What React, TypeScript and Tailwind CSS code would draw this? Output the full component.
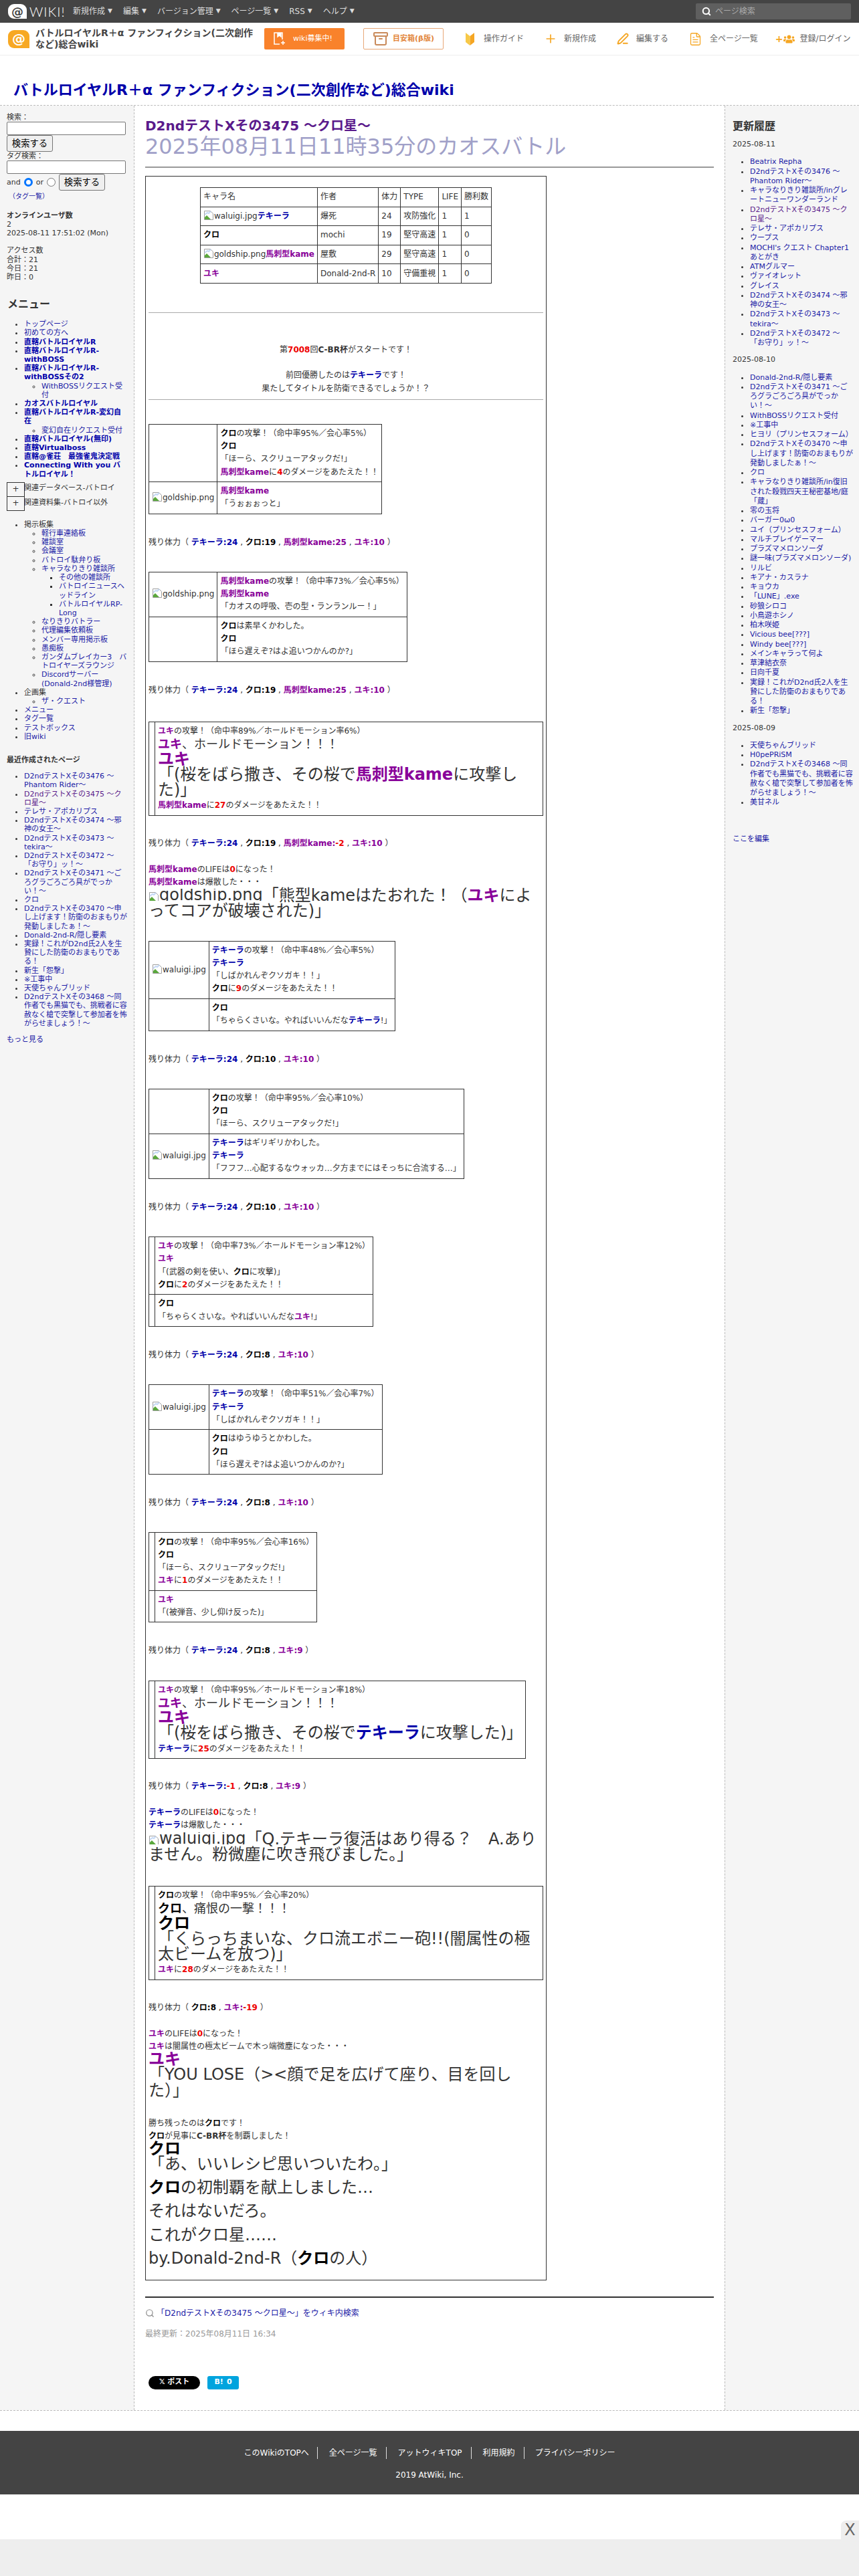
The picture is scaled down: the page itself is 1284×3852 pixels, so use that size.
import { type ReactNode } from "react";
import { Archive, FileText, PenLine, Plus, Search } from "lucide-react";
import { FaUsers } from "react-icons/fa";

const T = ({ children = "テキーラ" }: { children?: ReactNode }) => <b className="text-[#0000aa]">{children}</b>;
const K = ({ children = "クロ" }: { children?: ReactNode }) => <b className="text-black">{children}</b>;
const U = ({ children = "ユキ" }: { children?: ReactNode }) => <b className="text-[#880099]">{children}</b>;
const M = ({ children = "馬刺型kame" }: { children?: ReactNode }) => <b className="text-[#880099]">{children}</b>;
const R = ({ children }: { children: ReactNode }) => <b className="text-[#ee0000]">{children}</b>;
const Big = ({ children }: { children: ReactNode }) => <span className="text-[24px]">{children}</span>;
const Mid = ({ children }: { children: ReactNode }) => <span className="text-[18px]">{children}</span>;

function BrokenIcon() {
  return (
    <svg className="inline-block align-[-3px]" width="16" height="16" viewBox="0 0 16 16">
      <path d="M1.5 1.5h9l4 4v9h-13z" fill="#fff" stroke="#a0a0a0" />
      <path d="M2 14v-3l3-3 3 3 3 3z" fill="#5aa83c" />
      <path d="M2 7l4-3 2 1 3-3" fill="none" stroke="#c4d8f4" strokeWidth="2" />
    </svg>
  );
}

function BrokenImg({ alt, big }: { alt: string; big?: boolean }) {
  if (big) {
    return (
      <span className="inline-block h-[18px] overflow-hidden whitespace-nowrap">
        <BrokenIcon />
        {alt}
      </span>
    );
  }
  return (
    <span className="whitespace-nowrap">
      <BrokenIcon />
      {alt}
    </span>
  );
}

function Td({ children }: { children?: ReactNode }) {
  return <td className="border border-[#333] px-[4px] py-[4.2px] align-middle">{children}</td>;
}

function Battle({ rows }: { rows: [ReactNode, ReactNode][] }) {
  return (
    <table className="border-collapse">
      <tbody>
        {rows.map((row, i) => (
          <tr key={i}>
            <Td>{row[0]}</Td>
            <Td>{row[1]}</Td>
          </tr>
        ))}
      </tbody>
    </table>
  );
}

function Remain({ children, tight }: { children: ReactNode; tight?: boolean }) {
  return <div className={tight ? "pt-[32px] pb-[20px]" : "pt-[33px] pb-[34px]"}>残り体力（ {children} ）</div>;
}

function Links({ items }: { items: (string | { t: string; bold?: boolean; visited?: boolean; sub?: ReactNode; plain?: boolean })[] }) {
  return (
    <ul className="list-disc pl-[26px] [&_ul]:list-[circle] [&_ul_ul]:list-[square]">
      {items.map((item, i) => {
        const o = typeof item === "string" ? { t: item } : item;
        return (
          <li key={i}>
            <a
              className={
                o.plain
                  ? "text-[#333]"
                  : o.visited
                    ? "text-[#5a1a8b]"
                    : o.bold
                      ? "font-bold text-[#0000aa]"
                      : "text-[#1a1aa6]"
              }
            >
              {o.t}
            </a>
            {"sub" in o ? o.sub : null}
          </li>
        );
      })}
    </ul>
  );
}

const recent = [
  "D2ndテストXその3476 〜Phantom Rider〜",
  { t: "D2ndテストXその3475 〜クロ星〜", visited: true },
  "テレサ・アポカリプス",
  "D2ndテストXその3474 〜邪神の女王〜",
  "D2ndテストXその3473 〜tekira〜",
  "D2ndテストXその3472 〜「お守り」ッ！〜",
  "D2ndテストXその3471 〜ごろグラごろごろ具がでっかい！〜",
  "クロ",
  "D2ndテストXその3470 〜申し上げます！防衛のおまもりが発動しましたぁ！〜",
  "Donald-2nd-R/隠し要素",
  "実録！これがD2nd氏2人を生贄にした防衛のおまもりである！",
  "新生「怨撃」",
  "※工事中",
  "天使ちゃんブリッド",
  "D2ndテストXその3468 〜同作者でも黒猫でも、挑戦者に容赦なく槍で突撃して参加者を怖がらせましょう！〜",
];

const history1 = [
  "Beatrix Repha",
  "D2ndテストXその3476 〜Phantom Rider〜",
  "キャラなりきり雑談所/inグレートニューワンダーランド",
  { t: "D2ndテストXその3475 〜クロ星〜", visited: true },
  "テレサ・アポカリプス",
  "ウープス",
  "MOCHI's クエスト Chapter1 あとがき",
  "ATMグルマー",
  "ヴァイオレット",
  "グレイス",
  "D2ndテストXその3474 〜邪神の女王〜",
  "D2ndテストXその3473 〜tekira〜",
  "D2ndテストXその3472 〜「お守り」ッ！〜",
];
const history2 = [
  "Donald-2nd-R/隠し要素",
  "D2ndテストXその3471 〜ごろグラごろごろ具がでっかい！〜",
  "WithBOSSリクエスト受付",
  "※工事中",
  "ヒヨリ（プリンセスフォーム）",
  "D2ndテストXその3470 〜申し上げます！防衛のおまもりが発動しましたぁ！〜",
  "クロ",
  "キャラなりきり雑談所/in復旧された殺戮四天王秘密基地/庭「蔵」",
  "零の玉将",
  "バーガー0ω0",
  "ユイ（プリンセスフォーム）",
  "マルチプレイゲーマー",
  "プラズマメロンソーダ",
  "謎一味(プラズマメロンソーダ)",
  "リルビ",
  "キアナ・カスラナ",
  "キョウカ",
  "「LUNE」.exe",
  "砂狼シロコ",
  "小鳥遊ホシノ",
  "柏木咲姫",
  "Vicious bee[???]",
  "Windy bee[???]",
  "メインキャラって何よ",
  "草津結衣奈",
  "日向千夏",
  "実録！これがD2nd氏2人を生贄にした防衛のおまもりである！",
  "新生「怨撃」",
];
const history3 = [
  "天使ちゃんブリッド",
  "H0pePRiSM",
  "D2ndテストXその3468 〜同作者でも黒猫でも、挑戦者に容赦なく槍で突撃して参加者を怖がらせましょう！〜",
  "美甘ネル",
];

function LeftBar() {
  return (
    <aside className="bg-[#f5f5f5] border-r border-dashed border-[#bbb] pt-[11px] pl-[10px] pr-[9px] text-[11px] leading-[13.2px]">
      <div>検索：</div>
      <input className="block w-[178px] h-[20px] bg-white border border-[#767676] rounded-[2px]" />
      <button className="block h-[25px] w-[69px] bg-[#efefef] border border-[#767676] rounded-[3px] text-[13.33px] text-black">検索する</button>
      <div>タグ検索：</div>
      <input className="block w-[178px] h-[20px] bg-white border border-[#767676] rounded-[2px]" />
      <div className="flex items-center h-[25px]">
        and
        <span className="mx-[5px] w-[13px] h-[13px] rounded-full border-[3px] border-[#0075ff] bg-white" />
        or
        <span className="mx-[5px] w-[13px] h-[13px] rounded-full border border-[#767676] bg-white" />
        <button className="h-[25px] w-[69px] bg-[#efefef] border border-[#767676] rounded-[3px] text-[13.33px] text-black">検索する</button>
      </div>
      <div className="pl-[3px] pt-[2px] text-[10px] text-[#1a1aa6]">（タグ一覧）</div>
      <div className="mt-[15px] font-bold">オンラインユーザ数</div>
      <div>2</div>
      <div>2025-08-11 17:51:02 (Mon)</div>
      <div className="mt-[13.2px]">アクセス数</div>
      <div>合計：21</div>
      <div>今日：21</div>
      <div>昨日：0</div>
      <h3 className="mt-[24px] text-[16px] leading-[20px] font-bold pl-[1px]">メニュー</h3>
      <div className="mt-[13px]">
        <Links
          items={[
            "トップページ",
            "初めての方へ",
            { t: "直轄バトルロイヤルR", bold: true },
            { t: "直轄バトルロイヤルR-withBOSS", bold: true },
            {
              t: "直轄バトルロイヤルR-withBOSSその2",
              bold: true,
              sub: <Links items={["WithBOSSリクエスト受付"]} />,
            },
            { t: "カオスバトルロイヤル", bold: true },
            { t: "直轄バトルロイヤルR-変幻自在", bold: true, sub: <Links items={["変幻自在リクエスト受付"]} /> },
            { t: "直轄バトルロイヤル(無印)", bold: true },
            { t: "直轄Virtualboss", bold: true },
            { t: "直轄@雀荘　最強雀鬼決定戦", bold: true },
            { t: "Connecting With you バトルロイヤル！", bold: true },
          ]}
        />
      </div>
      <div className="mt-[5px] flex">
        <div>
          <div className="w-[27px] h-[22px] border border-[#333] flex items-center justify-center text-[12px]">+</div>
          <div className="w-[27px] h-[22px] -mt-px border border-[#333] flex items-center justify-center text-[12px]">+</div>
        </div>
        <div className="-ml-[1px]">
          <div className="h-[22px] pt-[2px]">関連データベース-バトロイ</div>
          <div className="h-[22px] pt-[2px]">関連資料集-バトロイ以外</div>
        </div>
      </div>
      <div className="mt-[13px]">
        <Links
          items={[
            {
              t: "掲示板集",
              plain: true,
              sub: (
                <Links
                  items={[
                    "軽行車連絡板",
                    "雑談室",
                    "会議室",
                    "バトロイ駄弁り板",
                    {
                      t: "キャラなりきり雑談所",
                      sub: <Links items={["その他の雑談所", "バトロイニュースヘッドライン", "バトルロイヤルRP-Long"]} />,
                    },
                    "なりきりバトラー",
                    "代理編集依頼板",
                    "メンバー専用掲示板",
                    "愚痴板",
                    "ガンダムブレイカー3　バトロイヤーズラウンジ",
                    "Discordサーバー(Donald-2nd様管理)",
                  ]}
                />
              ),
            },
            { t: "企画集", plain: true, sub: <Links items={["ザ・クエスト"]} /> },
            "メニュー",
            "タグ一覧",
            "テストボックス",
            "旧wiki",
          ]}
        />
      </div>
      <div className="mt-[22px] font-bold">最近作成されたページ</div>
      <div className="mt-[11px]">
        <Links items={recent} />
      </div>
      <div className="mt-[11px] text-[#1a1aa6]">もっと見る</div>
    </aside>
  );
}

function RightBar() {
  return (
    <aside className="bg-[#f5f5f5] border-l border-dashed border-[#bbb] pt-[21px] pl-[11px] pr-[8px] text-[11px] leading-[14.25px]">
      <h3 className="text-[16px] leading-[20px] font-bold">更新履歴</h3>
      <div className="mt-[10px]">2025-08-11</div>
      <div className="mt-[12px]"><Links items={history1} /></div>
      <div className="mt-[11px]">2025-08-10</div>
      <div className="mt-[12px]"><Links items={history2} /></div>
      <div className="mt-[11px]">2025-08-09</div>
      <div className="mt-[12px]"><Links items={history3} /></div>
      <div className="mt-[40px] text-[#1a1aa6]">ここを編集</div>
    </aside>
  );
}

function Article() {
  return (
    <div className="w-[600px] border border-[#333] p-[4px] pt-[16px] leading-[19.2px] text-[12px]">
      <table className="border-collapse mx-auto">
        <tbody>
          <tr><Td>キャラ名</Td><Td>作者</Td><Td>体力</Td><Td>TYPE</Td><Td>LIFE</Td><Td>勝利数</Td></tr>
          <tr><Td><BrokenImg alt="waluigi.jpg" /><T /></Td><Td>爆死</Td><Td>24</Td><Td>攻防強化</Td><Td>1</Td><Td>1</Td></tr>
          <tr><Td><K /></Td><Td>mochi</Td><Td>19</Td><Td>堅守高速</Td><Td>1</Td><Td>0</Td></tr>
          <tr><Td><BrokenImg alt="goldship.png" /><M /></Td><Td>屋敷</Td><Td>29</Td><Td>堅守高速</Td><Td>1</Td><Td>0</Td></tr>
          <tr><Td><U /></Td><Td>Donald-2nd-R</Td><Td>10</Td><Td>守備重視</Td><Td>1</Td><Td>0</Td></tr>
        </tbody>
      </table>
      <hr className="mt-[43px] border-[#aaa]" />
      <div className="mt-[46px] text-center">
        第<R>7008</R>回<b>C-BR杯</b>がスタートです！<br /><br />
        前回優勝したのは<T />です！<br />
        果たしてタイトルを防衛できるでしょうか！？
      </div>
      <hr className="mt-[6px] border-[#aaa]" />
      <div className="mt-[36px]">
        <Battle
          rows={[
            ["", <><K />の攻撃！（命中率95%／会心率5%）<br /><K /><br />「ほーら、スクリューアタックだ!」<br /><M />に<R>4</R>のダメージをあたえた！！</>],
            [<BrokenImg alt="goldship.png" />, <><M /><br />「うぉぉぉっと」</>],
          ]}
        />
      </div>
      <Remain><T>テキーラ:24</T> , <K>クロ:19</K> , <M>馬刺型kame:25</M> , <U>ユキ:10</U></Remain>
      <Battle
        rows={[
          [<BrokenImg alt="goldship.png" />, <><M />の攻撃！（命中率73%／会心率5%）<br /><M /><br />「カオスの呼吸、壱の型・ランランルー！」</>],
          ["", <><K />は素早くかわした。<br /><K /><br />「ほら遅えぞ?はよ追いつかんのか?」</>],
        ]}
      />
      <Remain><T>テキーラ:24</T> , <K>クロ:19</K> , <M>馬刺型kame:25</M> , <U>ユキ:10</U></Remain>
      <div className="mt-[3px]">
        <Battle
          rows={[
            ["", <><U />の攻撃！（命中率89%／ホールドモーション率6%）<br /><Mid><U />、ホールドモーション！！！</Mid><br /><Big><U /></Big><br /><Big>「(桜をばら撒き、その桜で<M />に攻撃した)」</Big><br /><M />に<R>27</R>のダメージをあたえた！！</>],
          ]}
        />
      </div>
      <Remain tight><T>テキーラ:24</T> , <K>クロ:19</K> , <M>馬刺型kame:<R>-2</R></M> , <U>ユキ:10</U></Remain>
      <div>
        <M />のLIFEは<R>0</R>になった！<br />
        <M />は爆散した・・・<br />
        <Big><BrokenImg big alt="goldship.png" />「熊型kameはたおれた！（<U />によってコアが破壊された)」</Big>
      </div>
      <div className="mt-[30px]">
        <Battle
          rows={[
            [<BrokenImg alt="waluigi.jpg" />, <><T />の攻撃！（命中率48%／会心率5%）<br /><T /><br />「しばかれんぞクソガキ！！」<br /><K />に<R>9</R>のダメージをあたえた！！</>],
            ["", <><K /><br />「ちゃらくさいな。やればいいんだな<T />!」</>],
          ]}
        />
      </div>
      <Remain><T>テキーラ:24</T> , <K>クロ:10</K> , <U>ユキ:10</U></Remain>
      <Battle
        rows={[
          ["", <><K />の攻撃！（命中率95%／会心率10%）<br /><K /><br />「ほーら、スクリューアタックだ!」</>],
          [<BrokenImg alt="waluigi.jpg" />, <><T />はギリギリかわした。<br /><T /><br />「フフフ…心配するなウォッカ…夕方までにはそっちに合流する…」</>],
        ]}
      />
      <Remain><T>テキーラ:24</T> , <K>クロ:10</K> , <U>ユキ:10</U></Remain>
      <Battle
        rows={[
          ["", <><U />の攻撃！（命中率73%／ホールドモーション率12%）<br /><U /><br />「(武器の剣を使い、<K />に攻撃)」<br /><K />に<R>2</R>のダメージをあたえた！！</>],
          ["", <><K /><br />「ちゃらくさいな。やればいいんだな<U />!」</>],
        ]}
      />
      <Remain><T>テキーラ:24</T> , <K>クロ:8</K> , <U>ユキ:10</U></Remain>
      <Battle
        rows={[
          [<BrokenImg alt="waluigi.jpg" />, <><T />の攻撃！（命中率51%／会心率7%）<br /><T /><br />「しばかれんぞクソガキ！！」</>],
          ["", <><K />はゆうゆうとかわした。<br /><K /><br />「ほら遅えぞ?はよ追いつかんのか?」</>],
        ]}
      />
      <Remain><T>テキーラ:24</T> , <K>クロ:8</K> , <U>ユキ:10</U></Remain>
      <Battle
        rows={[
          ["", <><K />の攻撃！（命中率95%／会心率16%）<br /><K /><br />「ほーら、スクリューアタックだ!」<br /><U />に<R>1</R>のダメージをあたえた！！</>],
          ["", <><U /><br />「(被弾音、少し仰け反った)」</>],
        ]}
      />
      <Remain><T>テキーラ:24</T> , <K>クロ:8</K> , <U>ユキ:9</U></Remain>
      <Battle
        rows={[
          ["", <><U />の攻撃！（命中率95%／ホールドモーション率18%）<br /><Mid><U />、ホールドモーション！！！</Mid><br /><Big><U /></Big><br /><Big>「(桜をばら撒き、その桜で<T />に攻撃した)」</Big><br /><T />に<R>25</R>のダメージをあたえた！！</>],
        ]}
      />
      <Remain tight><T>テキーラ:<R>-1</R></T> , <K>クロ:8</K> , <U>ユキ:9</U></Remain>
      <div>
        <T />のLIFEは<R>0</R>になった！<br />
        <T />は爆散した・・・<br />
        <Big><BrokenImg big alt="waluigi.jpg" />「Q.テキーラ復活はあり得る？　A.ありません。粉微塵に吹き飛びました。」</Big>
      </div>
      <div className="mt-[33px]">
        <Battle
          rows={[
            ["", <><K />の攻撃！（命中率95%／会心率20%）<br /><Mid><K />、痛恨の一撃！！！</Mid><br /><Big><K /></Big><br /><Big>「くらっちまいな、クロ流エボニー砲!!(闇属性の極太ビームを放つ)」</Big><br /><U />に<R>28</R>のダメージをあたえた！！</>],
          ]}
        />
      </div>
      <Remain tight><K>クロ:8</K> , <U>ユキ:<R>-19</R></U></Remain>
      <div>
        <U />のLIFEは<R>0</R>になった！<br />
        <U />は闇属性の極太ビームで木っ端微塵になった・・・<br />
        <Big><U /></Big><br />
        <Big>「YOU LOSE（&gt;&lt;顔で足を広げて座り、目を回した）」</Big>
      </div>
      <div className="mt-[26px]">
        勝ち残ったのは<K />です！<br />
        <K />が見事に<b>C-BR杯</b>を制覇しました！<br />
        <Big><K /></Big><br />
        <Big>「あ、いいレシピ思いついたわ。」</Big>
      </div>
      <div className="mt-[3px] text-[24px] leading-[35.5px] pb-[9px]">
        <K />の初制覇を献上しました…<br />
        それはないだろ。<br />
        これがクロ星……<br />
        by.Donald-2nd-R（<K />の人）
      </div>
    </div>
  );
}

function NavItem({ children }: { children: ReactNode }) {
  return (
    <span className="flex items-center">
      {children}
      <span className="ml-[4px] text-[9px]">▼</span>
    </span>
  );
}

export default function App() {
  return (
    <div className="w-[1284px] h-[3852px] overflow-hidden relative bg-white text-[#333] text-[12px] font-['DejaVu_Sans','Noto_Sans_CJK_JP',sans-serif]">
      <div className="h-[34px] bg-[#444] flex items-center text-white pl-[12px] pr-[12px]">
        <div className="flex items-center w-[97px]">
          <span className="w-[28px] h-[22px] rounded-[9px] rounded-br-none bg-white text-[#444] text-[18px] font-bold flex items-center justify-center">@</span>
          <span className="ml-[4px] text-[20px] leading-none font-['Lato',sans-serif] font-light tracking-[1px]">WIKI!</span>
        </div>
        <nav className="flex gap-[16px] text-[12px] text-[#ddd]">
          <NavItem>新規作成</NavItem>
          <NavItem>編集</NavItem>
          <NavItem>バージョン管理</NavItem>
          <NavItem>ページ一覧</NavItem>
          <NavItem>RSS</NavItem>
          <NavItem>ヘルプ</NavItem>
        </nav>
        <div className="ml-auto w-[232px] h-[24px] rounded-[2px] bg-[#5f5f5f] flex items-center pl-[9px] text-[#aaa]">
          <Search size={14} strokeWidth={3.5} className="text-white mr-[6px]" />
          ページ検索
        </div>
      </div>
      <div className="h-[49px] border-b border-[#eee] flex items-center pl-[12px]">
        <span className="w-[32px] h-[27px] rounded-[9px] rounded-br-none bg-[#f7a823] text-white text-[20px] font-bold flex items-center justify-center">@</span>
        <div className="ml-[9px] w-[334px] text-[14px] leading-[17px] font-bold text-[#444]">バトルロイヤルR＋α ファンフィクション(二次創作など)総合wiki</div>
        <a className="ml-[8px] w-[120px] h-[32px] rounded-[2px] bg-[#f9822b] text-white flex items-center pl-[14px] gap-[11px] text-[11px]">
          <svg width="18" height="20" viewBox="0 0 18 20" fill="none" stroke="#fff" strokeWidth="1.5">
            <path d="M9 18H1V1h12v10" />
            <path d="M6 1v6l2.5-2L11 7V1" fill="#fff" />
            <path d="M14 13v6M11 16h6" />
          </svg>
          wiki募集中!
        </a>
        <a className="ml-[28px] w-[120px] h-[32px] rounded-[2px] border border-[#e8a878] text-[#e2853a] flex items-center justify-center gap-[6px] text-[11px] font-bold">
          <Archive size={24} className="text-[#c98a5a]" />目安箱(β版)
        </a>
        <span className="ml-[33px] flex items-center gap-[14px] text-[#666]">
          <svg width="13" height="19" viewBox="0 0 13 19">
            <path d="M0 0l6.5 5v14L0 14z" fill="#f7c948" />
            <path d="M13 0L6.5 5v14L13 14z" fill="#f5a623" />
          </svg>
          操作ガイド
        </span>
        <span className="ml-[30px] flex items-center gap-[10px] text-[#666]"><Plus size={20} className="text-[#f5a623]" />新規作成</span>
        <span className="ml-[31px] flex items-center gap-[11px] text-[#666]"><PenLine size={18} strokeWidth={2.5} className="text-[#f5a623]" />編集する</span>
        <span className="ml-[30px] flex items-center gap-[11px] text-[#666]"><FileText size={21} strokeWidth={1.5} className="text-[#f5a623]" />全ページ一覧</span>
        <span className="ml-[26px] flex items-center gap-[8px] text-[#666]">
          <span className="flex items-center text-[#f5a623] font-bold text-[14px] leading-none">+<FaUsers size={17} /></span>
          登録/ログイン
        </span>
      </div>
      <div className="h-[75px] pl-[20px] pt-[36px] border-b border-dashed border-[#bbb]">
        <h1 className="text-[22px] leading-[32px] font-bold text-[#0000aa]">バトルロイヤルR＋α ファンフィクション(二次創作など)総合wiki</h1>
      </div>
      <div className="grid grid-cols-[201px_1fr_201px] h-[3447px] border-b border-dashed border-[#bbb]">
        <LeftBar />
        <main className="px-[16px] pt-[17px]">
          <h2 className="text-[20px] leading-[26px] font-bold text-[#5a1a8b]">D2ndテストXその3475 〜クロ星〜</h2>
          <div className="text-[32px] leading-[36px] text-[#a0a0c8]">2025年08月11日11時35分のカオスバトル</div>
          <hr className="mt-[12px] border-t-2 border-[#999]" />
          <div className="mt-[12px]"><Article /></div>
          <hr className="mt-[24px] border-t-2 border-[#333]" />
          <div className="mt-[14px] flex items-center gap-[3px] text-[#1a1aa6]">
            <Search size={14} className="text-[#888]" />
            「D2ndテストXその3475 〜クロ星〜」をウィキ内検索
          </div>
          <div className="mt-[13px] text-[#999]">最終更新：2025年08月11日 16:34</div>
          <div className="mt-[54px] ml-[5px] flex gap-[11px]">
            <span className="w-[77px] h-[20px] rounded-full bg-black text-white flex items-center justify-center text-[11px] font-bold">𝕏 ポスト</span>
            <span className="w-[47px] h-[20px] rounded-[3px] bg-[#00a4de] text-white flex items-center justify-center text-[11px] font-bold gap-[5px]"><span>B!</span><span>0</span></span>
          </div>
        </main>
        <RightBar />
      </div>
      <footer className="mt-[30px] h-[95px] bg-[#444] text-white pt-[24px] text-[12px]">
        <div className="flex justify-center">
          <span className="pr-[12px] border-r border-[#ddd]">このWikiのTOPへ</span>
          <span className="pl-[17px] pr-[13px] border-r border-[#ddd]">全ページ一覧</span>
          <span className="pl-[17px] pr-[13px] border-r border-[#ddd]">アットウィキTOP</span>
          <span className="pl-[17px] pr-[13px] border-r border-[#ddd]">利用規約</span>
          <span className="pl-[16px]">プライバシーポリシー</span>
        </div>
        <div className="mt-[15px] text-center">2019 AtWiki, Inc.</div>
      </footer>
      <div className="absolute left-0 right-0 bottom-0 h-[55px] bg-[#eee]" />
      <div className="absolute right-0 bottom-[55px] w-[27px] h-[28px] bg-[#eee] rounded-tl-[8px] flex items-center justify-center text-[24px] text-[#666]">X</div>
    </div>
  );
}
